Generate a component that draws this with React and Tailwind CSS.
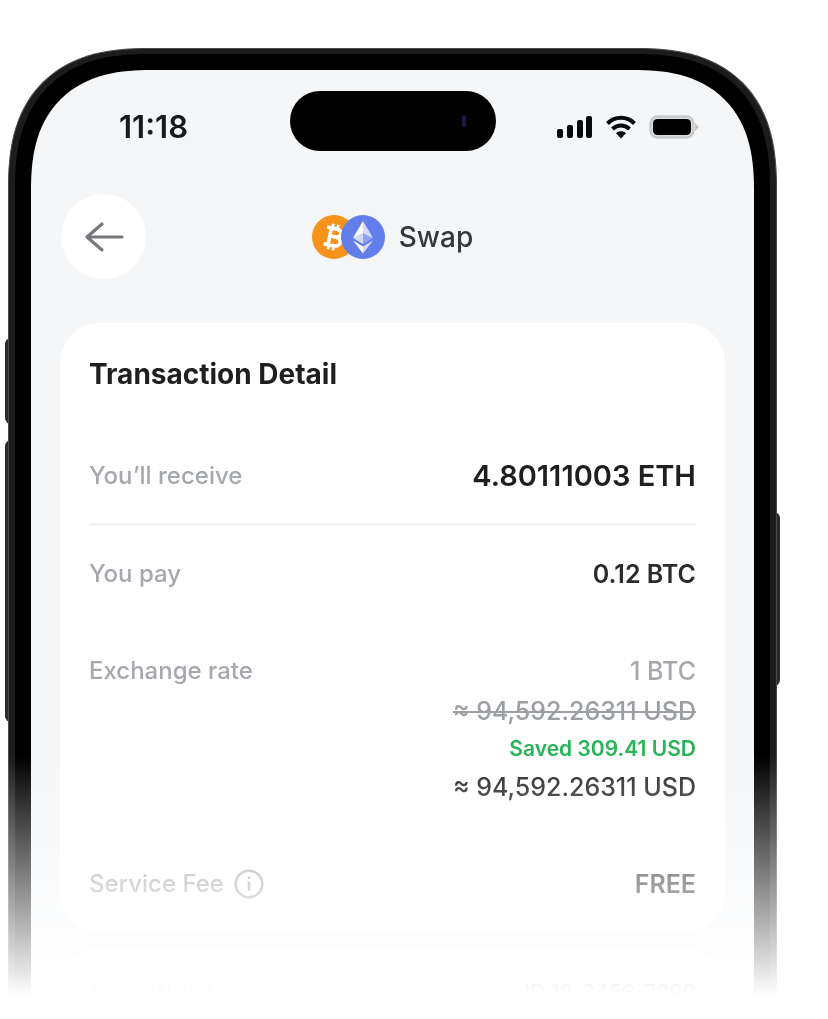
const rateLines = [
  { text: '1 BTC', className: 'text-[25px] leading-10 font-medium text-[#a5a8ac]' },
  { text: '≈ 94,592.26311 USD', className: 'text-[25px] leading-10 font-medium text-[#9b9ea3] line-through decoration-2' },
  { text: 'Saved 309.41 USD', className: 'text-[21px] leading-9 font-semibold text-[#27b557]' },
  { text: '≈ 94,592.26311 USD', className: 'text-[25px] leading-10 font-medium text-[#2b2b2b]' },
];

function SignalIcon() {
  return (
    <svg className="h-6 w-9" viewBox="0 0 36 24" fill="#08090b" aria-hidden="true">
      <rect x="0" y="14" width="6" height="9" rx="2" />
      <rect x="10" y="10" width="6" height="13" rx="2" />
      <rect x="20" y="5" width="6" height="18" rx="2" />
      <rect x="29" y="1" width="6" height="22" rx="2" />
    </svg>
  );
}

function WifiIcon() {
  return (
    <svg className="h-6 w-8" viewBox="0 0 32 24" aria-hidden="true">
      <path d="M2.5 8.5C10 0.8 22 0.8 29.5 8.5" fill="none" stroke="#08090b" strokeWidth="4" />
      <path d="M7.5 14C12.5 9.3 19.5 9.3 24.5 14" fill="none" stroke="#08090b" strokeWidth="4" />
      <path d="M16 23.5L11 18.3C13.8 15.7 18.2 15.7 21 18.3Z" fill="#08090b" />
    </svg>
  );
}

function BatteryIcon() {
  return (
    <svg className="h-6 w-[50px]" viewBox="0 0 50 24" aria-hidden="true">
      <rect x="1.5" y="1.5" width="43" height="21" rx="7" fill="#d9dbdc" stroke="#c9cbcd" strokeWidth="2.5" />
      <rect x="4" y="4" width="38" height="16" rx="4.5" fill="#000" />
      <path d="M46 8L50 12L46 16Z" fill="#c5c7c9" />
    </svg>
  );
}

function BitcoinIcon() {
  return (
    <svg className="size-11" viewBox="0 0 44 44" aria-hidden="true">
      <circle cx="22" cy="22" r="22" fill="#f7931a" />
      <g transform="translate(-1 1) rotate(12 22 22)" fill="none" stroke="#fff" strokeWidth="3.6">
        <path d="M14 12.5H24C30.5 12.5 30.5 20.5 24 20.5H18.5M24 20.5C32 20.5 32 29.5 24 29.5H14M18.5 12.5V29.5" />
        <path d="M19.5 8V12M24.5 8V12M19.5 30V34M24.5 30V34" strokeWidth="2.8" />
      </g>
    </svg>
  );
}

function EthereumIcon() {
  return (
    <svg className="-ml-[15px] size-11" viewBox="0 0 44 44" aria-hidden="true">
      <circle cx="22" cy="22" r="22" fill="#627eea" />
      <path d="M22 6L12 23L22 18.5Z" fill="#fff" />
      <path d="M22 6L32 23L22 18.5Z" fill="#d3dbf9" />
      <path d="M22 18.5L12 23L22 29Z" fill="#d3dbf9" />
      <path d="M22 18.5L32 23L22 29Z" fill="#8fa3f0" />
      <path d="M12 25.5L22 31.5V38.5Z" fill="#fff" />
      <path d="M32 25.5L22 31.5V38.5Z" fill="#d3dbf9" />
    </svg>
  );
}

function InfoIcon() {
  return (
    <svg className="size-[30px]" viewBox="0 0 30 30" fill="none" stroke="currentColor" aria-hidden="true">
      <circle cx="15" cy="15" r="13.3" strokeWidth="2.6" />
      <path d="M15 12.5V22M15 7.5V10" strokeWidth="2.6" />
    </svg>
  );
}

function StatusBar() {
  return (
    <div className="grid grid-cols-[1fr_206px_1fr] items-center">
      <time className="pt-3 pl-[88px] text-[31px] leading-8 font-semibold text-[#17191c]">11:18</time>
      <div className="flex h-[60px] items-center justify-end rounded-full bg-black pr-[30px]">
        <span className="h-3 w-1 rounded-full bg-[#1d1747]" />
      </div>
      <div className="flex items-center justify-end gap-3 pt-3 pr-[55px]">
        <SignalIcon />
        <WifiIcon />
        <BatteryIcon />
      </div>
    </div>
  );
}

export default function App() {
  return (
    <main className="min-h-screen bg-white pt-12 pr-12 pl-[5px] font-[Inter,sans-serif]">
      <div className="relative px-[3px] [mask-image:linear-gradient(to_bottom,#000_708px,transparent_948px)]">
        <span className="absolute top-[290px] left-0 h-[86px] w-3 rounded-md bg-[#2b2b2b]" />
        <span className="absolute top-[392px] left-0 h-[282px] w-3 rounded-md bg-[#2b2b2b]" />
        <span className="absolute top-[464px] right-0 h-[174px] w-3 rounded-md bg-[#2b2b2b]" />

        <div className="relative rounded-t-[140px] border-x border-t border-[#4a4a4a] bg-[#1c1c1c] px-[6px] pt-[5px] [corner-shape:superellipse(1.3)]">
          <div className="rounded-t-[134px] bg-black px-4 pt-4 [corner-shape:superellipse(1.3)]">
            <div className="rounded-t-[120px] bg-[#f4f6f8] pt-[21px] [corner-shape:superellipse(1.3)]">
              <StatusBar />

              <header className="mt-[43px] flex items-center px-[30px]">
                <button
                  type="button"
                  aria-label="Back"
                  className="flex size-[85px] items-center justify-center rounded-full bg-white text-[#75797d]"
                >
                  <svg className="h-8 w-10" viewBox="0 0 40 32" fill="none" stroke="currentColor" strokeWidth="3.2" strokeLinecap="round" strokeLinejoin="round">
                    <path d="M38 16H3M18 3L3 16L18 29" />
                  </svg>
                </button>
                <div className="flex flex-1 items-center justify-center pr-[85px]">
                  <BitcoinIcon />
                  <EthereumIcon />
                  <h1 className="pl-[14px] text-[28px] leading-10 font-medium text-[#35383b]">Swap</h1>
                </div>
              </header>

              <section className="mx-[29px] mt-11 rounded-[40px] bg-white px-[29px] pt-[31px] pb-[29px]">
                <h2 className="text-[28px] leading-10 font-bold text-[#1d1f21]">Transaction Detail</h2>
                <dl className="text-[25px] leading-10 font-medium">
                  <div className="mt-[62px] flex justify-between border-b-[3px] border-[#f3f4f5] pb-[27px]">
                    <dt className="text-2xl leading-10 text-[#a5a8ac]">You’ll receive</dt>
                    <dd className="text-[29px] font-semibold text-[#1d1f21]">4.80111003 ETH</dd>
                  </div>
                  <div className="mt-7 flex justify-between">
                    <dt className="text-2xl leading-10 text-[#a5a8ac]">You pay</dt>
                    <dd className="font-semibold text-[#2b2b2b]">0.12 BTC</dd>
                  </div>
                  <div className="mt-[57px] flex justify-between">
                    <dt className="text-2xl leading-10 text-[#a5a8ac]">Exchange rate</dt>
                    <dd className="text-right">
                      {rateLines.map((line, i) => (
                        <div key={i} className={line.className}>
                          {line.text}
                        </div>
                      ))}
                    </dd>
                  </div>
                  <div className="mt-[57px] flex justify-between">
                    <dt className="flex items-center gap-[10px] text-2xl leading-10 text-[#a5a8ac]">
                      Service Fee
                      <InfoIcon />
                    </dt>
                    <dd className="font-semibold text-[#2b2b2b]">FREE</dd>
                  </div>
                </dl>
              </section>

              <section className="mx-[29px] mt-4 rounded-t-[40px] bg-white px-[29px] pt-6">
                <dl className="flex justify-between text-[21px] leading-10 font-medium">
                  <dt className="text-[#a5a8ac]">Swap Wallet</dt>
                  <dd className="text-[#2b2b2b]">ID 12-3456-7890</dd>
                </dl>
              </section>
            </div>
          </div>
        </div>
      </div>
    </main>
  );
}
